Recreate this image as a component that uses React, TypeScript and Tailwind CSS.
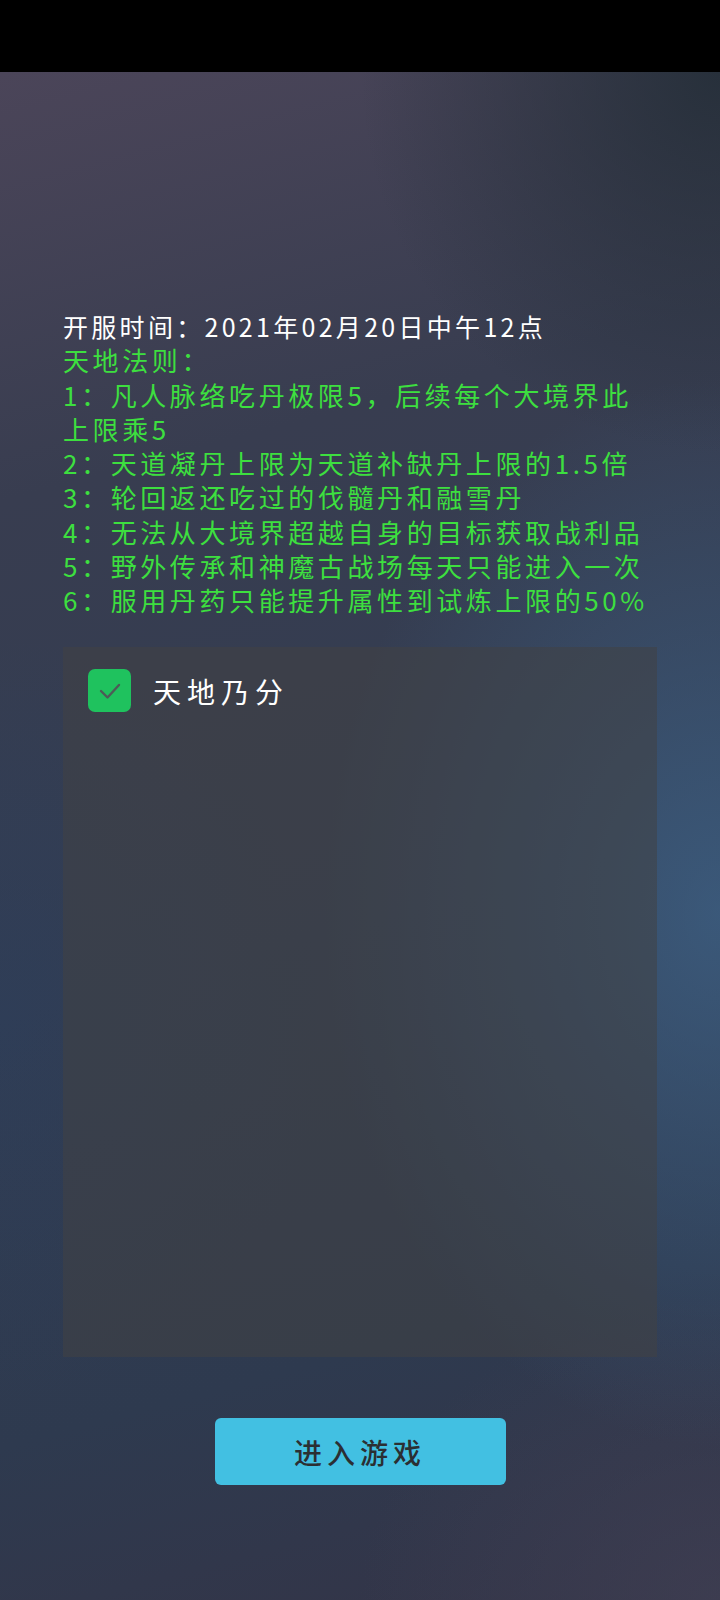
import React from "react";

const rules = [
  ["1：凡人脉络吃丹极限5，后续每个大境界此", "上限乘5"],
  ["2：天道凝丹上限为天道补缺丹上限的1.5倍"],
  ["3：轮回返还吃过的伐髓丹和融雪丹"],
  ["4：无法从大境界超越自身的目标获取战利品"],
  ["5：野外传承和神魔古战场每天只能进入一次"],
  ["6：服用丹药只能提升属性到试炼上限的50%"],
];

function CheckBox() {
  return (
    <div className="w-[43px] h-[43px] rounded-[7px] bg-[#1fc25e] flex items-center justify-center shrink-0">
      <svg width="26" height="26" viewBox="0 0 26 26" fill="none">
        <polyline
          points="4,13 10.5,19.5 22,7"
          stroke="#4d5b57"
          strokeWidth="2.4"
          strokeLinecap="round"
          strokeLinejoin="round"
        />
      </svg>
    </div>
  );
}

export default function App() {
  return (
    <div className="h-[1600px] flex flex-col font-['Noto_Sans_CJK_SC','Noto_Sans',sans-serif]">
      <div className="h-[72px] bg-black shrink-0" />
      <div className="flex-1 flex flex-col items-center px-[63px] pt-[237px] bg-[radial-gradient(ellipse_55%_35%_at_100%_55%,rgba(62,98,135,0.75),transparent),radial-gradient(ellipse_45%_25%_at_0%_62%,rgba(44,62,92,0.5),transparent),radial-gradient(ellipse_50%_20%_at_100%_100%,rgba(64,64,84,0.7),transparent),radial-gradient(ellipse_50%_25%_at_100%_0%,rgba(36,46,56,0.9),transparent),linear-gradient(165deg,#4b4559_0%,#383d50_25%,#323d52_55%,#2e3a4f_80%,#343447_100%)]">
        <div className="w-full leading-[34.25px]">
          <p className="text-white text-[25px] tracking-[3.3px]">
            开服时间：2021年02月20日中午12点
          </p>
          <p className="text-[#3ddf3f] text-[26px] tracking-[3.6px]">天地法则：</p>
          {rules.map((r, i) => (
            <p key={i} className="text-[#3ddf3f] text-[26px] tracking-[3.6px] whitespace-nowrap">
              {r[0]}
              {r[1] && (
                <>
                  <br />
                  {r[1]}
                </>
              )}
            </p>
          ))}
        </div>

        <div className="mt-[30px] w-full h-[710px] bg-[rgba(66,66,68,0.55)] px-[25px] pt-[22px]">
          <div className="flex items-center gap-[22px]">
            <CheckBox />
            <span className="text-white text-[28px] tracking-[6px]">天地乃分</span>
          </div>
        </div>

        <button
          type="button"
          className="mt-[61px] w-[291px] h-[67px] rounded-[6px] bg-[#42c0e2] text-[#2b2f33] text-[28px] tracking-[5px] font-medium flex items-center justify-center"
        >
          进入游戏
        </button>
      </div>
    </div>
  );
}
